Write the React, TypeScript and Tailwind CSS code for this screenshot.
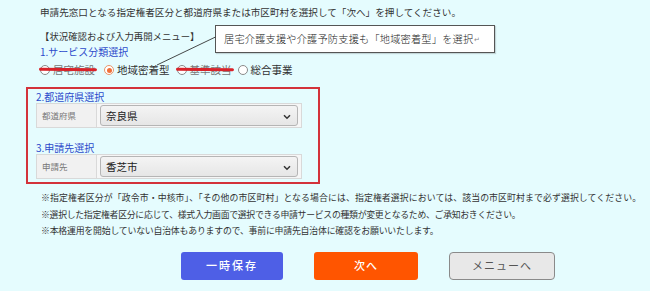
import React from "react";

const font = "font-['Noto_Sans_CJK_JP','Noto_Sans',sans-serif]";

function Radio({ checked }: { checked?: boolean }) {
  return checked ? (
    <span className="inline-flex items-center justify-center w-[10px] h-[10px] rounded-full border border-[#e8966a] bg-white mr-[3px]">
      <span className="w-[5px] h-[5px] rounded-full bg-[#f0703a]" />
    </span>
  ) : (
    <span className="inline-block w-[10px] h-[10px] rounded-full border border-[#8a8a8a] bg-white mr-[3px]" />
  );
}

function Opt({ label, checked, struck, mr }: { label: string; checked?: boolean; struck?: boolean; mr: string }) {
  return (
    <span className={`relative inline-flex items-center ${mr}`}>
      <Radio checked={checked} />
      <span className={struck ? "text-[#777]" : "text-[#333]"}>{label}</span>
      {struck && (
        <span className="absolute left-[-1px] right-[-2px] top-[6px] h-[3px] rounded-full bg-[#d8232a] rotate-[0.6deg]" />
      )}
    </span>
  );
}

function Chevron() {
  return (
    <svg width="8" height="6" viewBox="0 0 8 6" className="absolute right-[6px] top-[8px]">
      <path d="M1 1.2 L4 4.2 L7 1.2" fill="none" stroke="#333" strokeWidth="1.5" />
    </svg>
  );
}

function Row({ label, value }: { label: string; value: string }) {
  return (
    <div className="flex h-[25px] border border-[#d9d9d9] bg-[#f6f6f6]">
      <div className="w-[60px] flex items-center pl-[5px] text-[8.5px] text-[#777] bg-[#f1f1f1] border-r border-[#d9d9d9]">
        {label}
      </div>
      <div className="flex-1 flex items-center px-[3px]">
        <div className="relative w-full h-[21px] rounded-[3px] border border-[#b5b5b5] bg-gradient-to-b from-[#f4f4f4] to-[#e6e6e6] flex items-center pl-[5px] text-[10.5px] text-[#222]">
          {value}
          <Chevron />
        </div>
      </div>
    </div>
  );
}

export default function App() {
  return (
    <div className={`relative w-[650px] h-[291px] overflow-hidden bg-[#e5fcfe] text-[#333] ${font}`}>
      <div className="pl-[40px] pt-[4px]">
        <div className="h-[16px] flex items-center text-[9.6px]">
          申請先窓口となる指定権者区分と都道府県または市区町村を選択して「次へ」を押してください。
        </div>
        <div className="mt-[9px] h-[14px] flex items-center text-[9.4px]">【状況確認および入力再開メニュー】</div>
        <div className="h-[16px] flex items-center text-[10px] text-[#2d4acb]">1.サービス分類選択</div>
        <div className="mt-[3px] h-[16px] flex items-center text-[10.5px]">
          <Opt label="居宅施設" struck mr="mr-[9px]" />
          <Opt label="地域密着型" checked mr="mr-[7px]" />
          <Opt label="基準該当" struck mr="mr-[6px]" />
          <Opt label="総合事業" mr="mr-0" />
        </div>
      </div>

      <div className="mt-[9px] ml-[26px] w-[294px] h-[97px] border-2 border-[#d3323a] pl-[8px] pr-[16px]">
        <div className="h-[14px] flex items-center text-[10px] text-[#2d4acb]">2.都道府県選択</div>
        <Row label="都道府県" value="奈良県" />
        <div className="mt-[12px] h-[14px] flex items-center text-[10px] text-[#2d4acb]">3.申請先選択</div>
        <Row label="申請先" value="香芝市" />
      </div>

      <div className="mt-[6px] pl-[41px] text-[8.9px] leading-[16.5px] text-[#333]">
        <div className="tracking-[0.1px]">※指定権者区分が「政令市・中核市」、「その他の市区町村」となる場合には、指定権者選択においては、該当の市区町村まで必ず選択してください。</div>
        <div className="tracking-[-0.3px]">※選択した指定権者区分に応じて、様式入力画面で選択できる申請サービスの種類が変更となるため、ご承知おきください。</div>
        <div className="tracking-[-0.2px]">※本格運用を開始していない自治体もありますので、事前に申請先自治体に確認をお願いいたします。</div>
      </div>

      <div className="mt-[12px] ml-[181px] flex gap-[31px]">
        <button className="w-[102px] h-[28px] rounded-[3px] bg-[#4e5fe6] text-white text-[11px] tracking-[2px] font-medium">
          一時保存
        </button>
        <button className="w-[104px] h-[28px] rounded-[3px] bg-[#ff5500] text-white text-[11px] tracking-[1px] font-medium">
          次へ
        </button>
        <button className="w-[106px] h-[28px] rounded-[4px] bg-[#e8e8e8] border-[1.5px] border-[#8a8a8a] text-[#555] text-[11px] tracking-[1px]">
          メニューへ
        </button>
      </div>

      {/* callout */}
      <div className="absolute left-[215px] top-[25px] w-[280px] h-[28px] bg-white border border-[#555] shadow-[1px_1px_1px_rgba(0,0,0,0.15)] flex items-center pl-[8px] text-[10.2px] text-[#222] font-light tracking-[0.2px]">
        居宅介護支援や介護予防支援も「地域密着型」を選択<span className="text-[7px] text-[#888] ml-[1px]">↵</span>
      </div>
      <svg className="absolute left-0 top-0 pointer-events-none" width="650" height="291">
        <line x1="215.5" y1="37" x2="157" y2="65" stroke="#333" strokeWidth="0.9" />
      </svg>
    </div>
  );
}
